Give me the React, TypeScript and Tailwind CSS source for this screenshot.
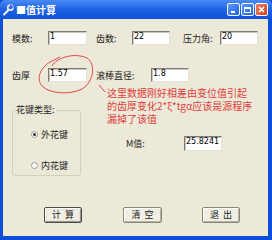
import React from "react";

const cjk = { fontFamily: '"Noto Sans CJK SC", "Noto Sans", sans-serif' };
const num = { fontFamily: '"DejaVu Sans", "Liberation Sans", sans-serif' };

function Field({ value, w = "w-[39px]", h = "h-[14px]" }: { value: string; w?: string; h?: string }) {
  return (
    <div
      className={`${w} ${h} shrink-0 bg-white border border-t-[#7b7b7b] border-l-[#7b7b7b] border-b-[#e4e2d6] border-r-[#e4e2d6] shadow-[inset_1px_1px_0_#c9c7ba] pl-[1px] text-[8px] leading-[10px] text-black`}
      style={num}
    >
      {value}
    </div>
  );
}

function Label({ children, className = "" }: { children: React.ReactNode; className?: string }) {
  return (
    <span className={`shrink-0 text-[9px] leading-[11px] text-[#222] ${className}`} style={cjk}>
      {children}
    </span>
  );
}

function Btn({ children, focus = false, w = "w-[38px]" }: { children: React.ReactNode; focus?: boolean; w?: string }) {
  return (
    <div
      className={`${w} h-[16px] flex items-center justify-center rounded-[2px] border ${
        focus
          ? "border-[#4a4a4a] shadow-[inset_1px_1px_0_#ffffff,inset_-1px_-1px_0_#9a988a,inset_0_0_0_2px_#e6e4d6]"
          : "border-[#8a8878] shadow-[inset_1px_1px_0_#ffffff,inset_-1px_-1px_0_#b5b3a4]"
      } bg-[#f1efe4] text-[9px] text-[#222] tracking-[4px] pl-[4px]`}
      style={cjk}
    >
      {children}
    </div>
  );
}

function Radio({ checked, label }: { checked?: boolean; label: string }) {
  return (
    <div className="flex items-center gap-[3px] pl-[18px]">
      <div className="w-[7px] h-[7px] rounded-full border border-[#9a9a9a] bg-white flex items-center justify-center">
        {checked && <div className="w-[3px] h-[3px] rounded-full bg-[#333]" />}
      </div>
      <Label>{label}</Label>
    </div>
  );
}

export default function App() {
  return (
    <div className="relative w-[272px] h-[240px] flex flex-col bg-[#0b4fd8] overflow-hidden">
      {/* 标题栏 */}
      <div className="h-[19px] shrink-0 flex items-center px-[2px] bg-gradient-to-b from-[#4a8af4] via-[#1d62e4] to-[#0d52da] rounded-t-[5px]">
        <svg width="12" height="12" viewBox="0 0 12 12" className="mr-[2px]">
          <path d="M2 10.5 L7 5.5" stroke="#f0f0f0" strokeWidth="2" strokeLinecap="round" />
          <circle cx="8.3" cy="3.7" r="2.6" fill="none" stroke="#e8e8e8" strokeWidth="1.6" />
          <path d="M8.3 1 L10.8 3.6" stroke="#1a60e4" strokeWidth="1.4" />
        </svg>
        <span className="text-white text-[10px] font-bold leading-[12px]" style={cjk}>
          ■值计算
        </span>
        <div className="ml-auto flex gap-[1px] mr-[2px]">
          <div className="w-[13px] h-[13px] rounded-[2px] border border-white bg-gradient-to-br from-[#5b97f8] to-[#2363e6] flex items-end pl-[3px] pb-[2px]">
            <div className="w-[4px] h-[2px] bg-white" />
          </div>
          <div className="w-[13px] h-[13px] rounded-[2px] border border-white bg-gradient-to-br from-[#5b97f8] to-[#2363e6] flex items-center justify-center">
            <div className="w-[7px] h-[6px] border border-white border-t-2" />
          </div>
          <div className="w-[13px] h-[13px] rounded-[2px] border border-white bg-gradient-to-br from-[#ec7d5a] to-[#d6401c] flex items-center justify-center">
            <svg width="7" height="7" viewBox="0 0 7 7">
              <path d="M1 1 L6 6 M6 1 L1 6" stroke="white" strokeWidth="1.6" />
            </svg>
          </div>
        </div>
      </div>

      {/* 窗体内容 */}
      <div className="flex-1 ml-[3px] mr-[4px] mb-[4px] bg-[#ece9d8] flex flex-col">
        {/* 模数 / 齿数 / 压力角 */}
        <div className="flex items-center mt-[12px] h-[14px]">
          <Label className="ml-[9px] w-[36px]">模数:</Label>
          <Field value="1" />
          <Label className="ml-[9px] w-[36px]">齿数:</Label>
          <Field value="22" w="w-[38px]" />
          <Label className="ml-[13px] w-[37px]">压力角:</Label>
          <Field value="20" w="w-[38px]" />
        </div>

        {/* 齿厚 / 滚棒直径 */}
        <div className="flex items-center mt-[23px] h-[14px]">
          <Label className="ml-[9px] w-[36px]">齿厚</Label>
          <Field value="1.57" />
          <Label className="ml-[9px] w-[55px]">滚棒直径:</Label>
          <Field value="1.8" w="w-[38px]" />
        </div>

        {/* 花键类型 + M值 */}
        <div className="flex items-start mt-[23px] h-[71px]">
          <fieldset className="ml-[9px] w-[69px] h-[71px] border border-[#d0d0bf] rounded-[3px] pt-[14px]">
            <legend className="ml-[2px] px-[1px] text-[9px] leading-[10px] text-[#222]" style={cjk}>
              花键类型:
            </legend>
            <div className="flex flex-col gap-[20px]">
              <Radio checked label="外花键" />
              <Radio label="内花键" />
            </div>
          </fieldset>
          <div className="flex items-center mt-[31px] ml-[45px] h-[15px]">
            <Label className="w-[58px]">M值:</Label>
            <Field value="25.8241" w="w-[38px]" h="h-[15px]" />
          </div>
        </div>

        {/* 按钮 */}
        <div className="flex mt-[31px]">
          <div className="ml-[41px]">
            <Btn focus>计算</Btn>
          </div>
          <div className="ml-[41px]">
            <Btn w="w-[39px]">清空</Btn>
          </div>
          <div className="ml-[40px]">
            <Btn>退出</Btn>
          </div>
        </div>
      </div>

      {/* 红色批注 */}
      <svg className="absolute left-0 top-0 pointer-events-none" width="272" height="240" viewBox="0 0 272 240">
        <path
          d="M52 66 C56 58, 74 52, 87 58 C96 64, 94 82, 82 89 C70 95, 50 94, 42 86 C36 79, 40 68, 50 62 L60 57"
          fill="none"
          stroke="#e04848"
          strokeWidth="1"
        />
        <path d="M99 85 L105 92" stroke="#e04848" strokeWidth="1" />
      </svg>
      <div
        className="absolute left-[107px] top-[86px] text-[10px] leading-[13px] text-[#e03c3c] whitespace-nowrap"
        style={cjk}
      >
        <div>这里数据刚好相差由变位值引起</div>
        <div>的齿厚变化2*ξ*tgα应该是源程序</div>
        <div>漏掉了该值</div>
      </div>
    </div>
  );
}
